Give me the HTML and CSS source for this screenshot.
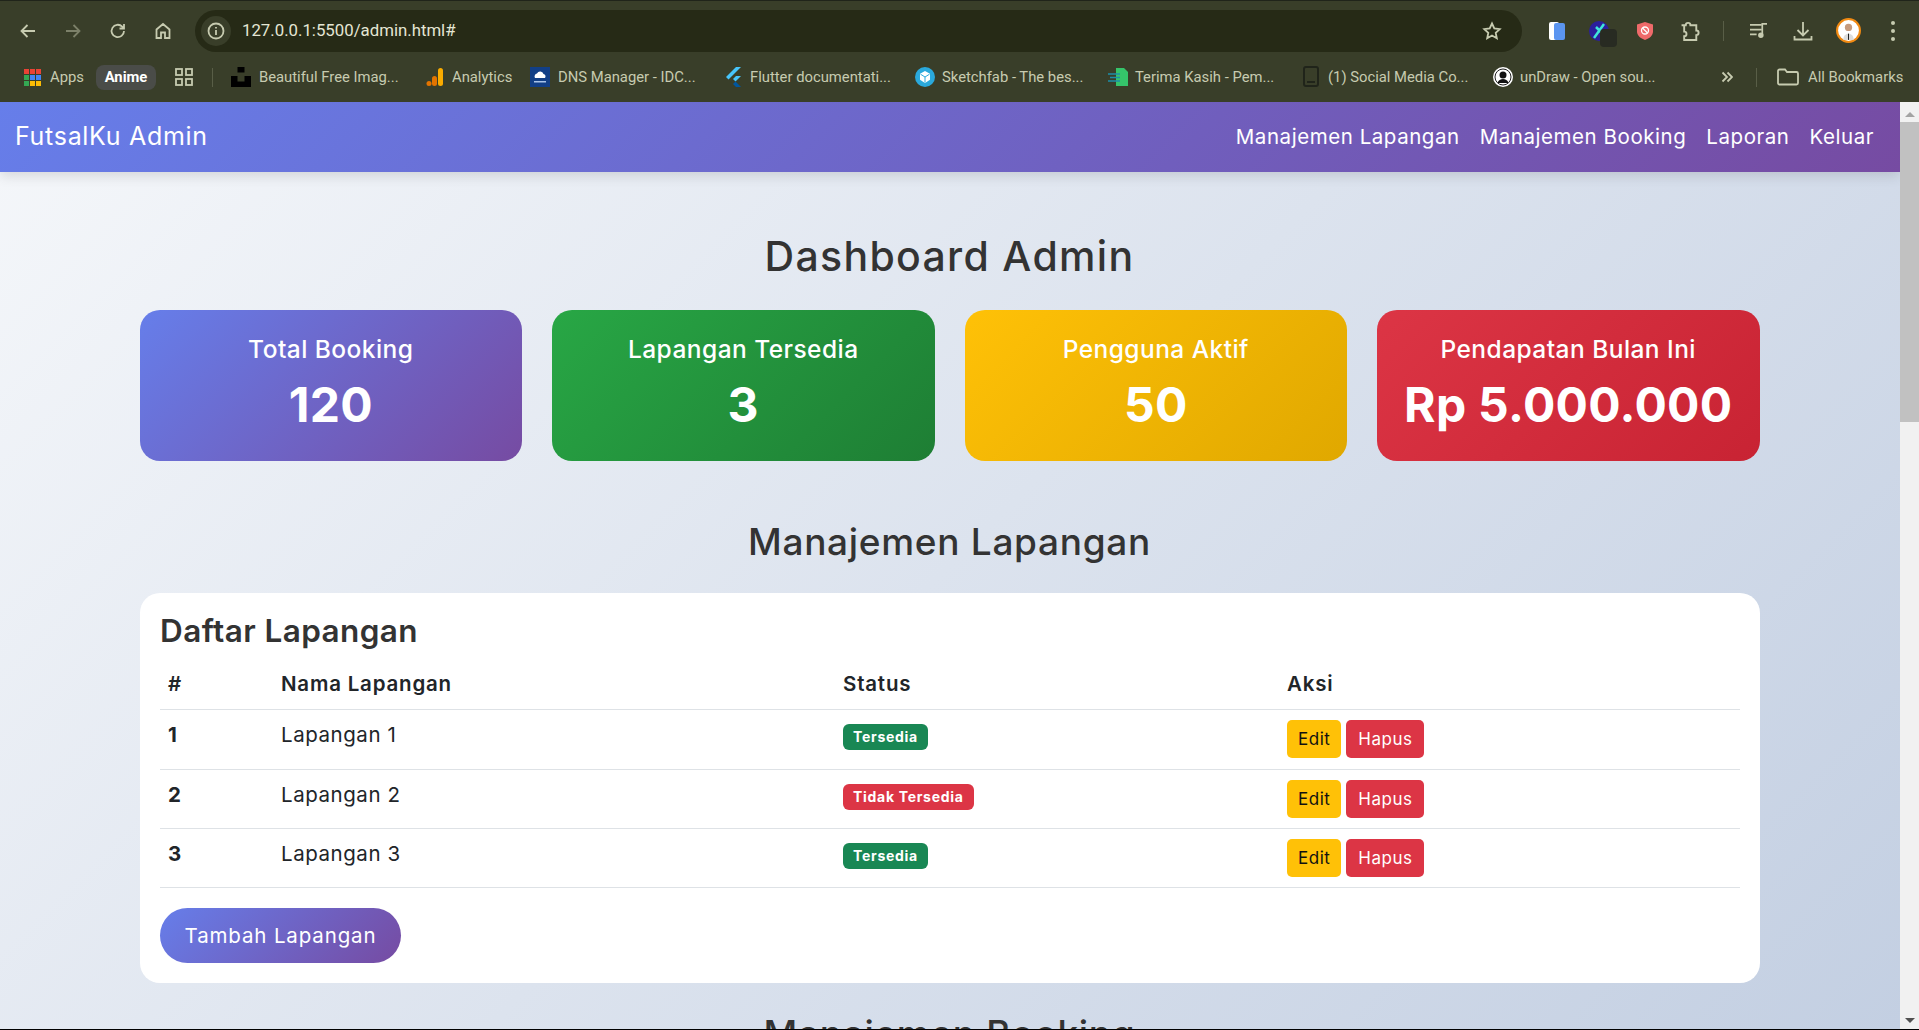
FILE: index.html
```html
<!DOCTYPE html>
<html lang="id">
<head>
  <meta charset="UTF-8" />
  <title>Dashboard Admin - FutsalKu</title>
  <meta name="viewport" content="width=device-width, initial-scale=1.0" />
  <link rel="stylesheet" href="styles.css">
</head>
<body>
  <div class="window">
    <!-- browser toolbar -->
    <header class="browser">
      <div class="toolbar">
        <div class="tool-nav">
          <svg class="ico" viewBox="0 0 20 20"><path d="M17 10H4M9.500 4L3.500 10l6 6"/></svg>
          <svg class="ico ico-dim" viewBox="0 0 20 20"><path d="M3 10h13M10.500 4l6 6-6 6"/></svg>
          <svg class="ico" viewBox="0 0 20 20"><path d="M16 10a6.200 6.200 0 1 1-1.800-4.400L16 7.500M16 3v4.500h-4.500"/></svg>
          <svg class="ico" viewBox="0 0 20 20"><path d="M3.500 17V8.500L10 3l6.500 5.500V17h-4.500v-5.500H8V17z"/></svg>
        </div>
        <div class="omnibox">
          <span class="site-chip">
            <svg class="ico" viewBox="0 0 20 20"><circle cx="10" cy="10" r="7.500"/><path d="M10 9v5M10 6v1.500"/></svg>
          </span>
          <span class="url">127.0.0.1:5500/admin.html#</span>
          <svg class="ico star" viewBox="0 0 20 20"><path d="M10 2.500l2.300 5 5.400.6-4 3.700 1.100 5.400-4.800-2.700-4.800 2.700 1.100-5.400-4-3.700 5.400-.6z"/></svg>
        </div>
        <div class="tool-ext">
          <svg class="ext ext-pages" viewBox="0 0 18 20"><rect x="1" y="1" width="10" height="18" rx="2" fill="#fff"/><rect x="6" y="2" width="11" height="17" rx="2" fill="#5b95f0"/></svg>
          <span class="ext-dev">
            <svg viewBox="0 0 20 20"><circle cx="10" cy="10" r="10" fill="#2b1f9c"/><path d="M5 17L15 3M7 6l6 6" stroke="#3fe6d8" stroke-width="2.500" fill="none"/></svg>
            <i class="ext-badge"></i>
          </span>
          <svg class="ext ext-shield" viewBox="0 0 20 20"><path d="M10 1l8 2.500v7c0 4-3.500 7-8 8.500-4.500-1.500-8-4.500-8-8.500v-7z" fill="#ef6a6a"/><circle cx="10" cy="9.500" r="3.500" fill="none" stroke="#fff" stroke-width="1.300"/><path d="M7.500 7l5 5" stroke="#fff" stroke-width="1.300"/></svg>
          <svg class="ico ext-puzzle" viewBox="2 0 19 19"><path d="M3 4h4a2.200 2.200 0 0 1 4.400 0H17v5a2.200 2.200 0 0 1 0 4.400V18H5.500v-3.500a2.200 2.200 0 0 0 0-4.400V4z"/></svg>
          <span class="tool-sep"></span>
          <svg class="ico ext-music" viewBox="0 0 20 18"><path d="M1 3h12M1 8h12M1 13h7M14 13V2h5"/><circle cx="12.500" cy="14" r="2" fill="#c7cbb0"/></svg>
          <svg class="ico ext-down" viewBox="0 0 20 20"><path d="M10 1v13M4.500 9l5.500 5.500L15.500 9M1.500 15v3.500h17V15"/></svg>
          <svg class="avatar" viewBox="0 0 24 24"><circle cx="12" cy="12" r="11" fill="#fff" stroke="#f28a12" stroke-width="2"/><circle cx="12" cy="9" r="3.500" fill="#c69a7c"/><path d="M7 21c0-4 2-6 5-6s5 2 5 6z" fill="#ddd"/><path d="M11.500 15h1v6h-1z" fill="#222"/></svg>
          <span class="kebab"><i></i><i></i><i></i></span>
        </div>
      </div>
      <nav class="bookmarks">
        <a class="mark mark-apps"><span class="apps-grid"><i class="r"></i><i class="r"></i><i class="r"></i><i class="g"></i><i class="b"></i><i class="b"></i><i class="g"></i><i class="y"></i><i class="y"></i></span>Apps</a>
        <a class="mark mark-anime">Anime</a>
        <svg class="ico mark-tiles" viewBox="0 0 18 18"><rect x="1" y="1" width="6" height="6"/><rect x="11" y="1" width="6" height="6"/><rect x="1" y="11" width="6" height="6"/><rect x="11" y="11" width="6" height="6"/></svg>
        <span class="mark-sep"></span>
        <a class="mark mark-unsplash"><svg viewBox="0 0 20 20"><path d="M6.500 0h7v5.500h-7zM0 9h6.500v5.500h7V9H20v11H0z"/></svg>Beautiful Free Imag...</a>
        <a class="mark mark-ga"><svg viewBox="0 0 18 20"><rect x="12" y="1" width="5" height="18" rx="2.500" fill="#f9ab00"/><rect x="6" y="9" width="5" height="10" rx="2.500" fill="#e37400"/><circle cx="3" cy="16.500" r="2.500" fill="#e37400"/></svg>Analytics</a>
        <a class="mark mark-dns"><svg viewBox="0 0 20 20"><rect width="20" height="20" fill="#123f86"/><path d="M5 11a3 3 0 0 1 2-4.500 3.500 3.500 0 0 1 6.500.5A2.500 2.500 0 0 1 15 11z" fill="#fff"/><path d="M4 14h12v1.500H4z" fill="#a9c4ea"/></svg>DNS Manager - IDC...</a>
        <a class="mark mark-flutter"><svg viewBox="0 0 16 20"><path d="M10 0h5L5 10l-2.500 2.500L0 10z" fill="#47c5fb"/><path d="M10 9h5l-5.500 5.500L7 12z" fill="#47c5fb"/><path d="M7 17l2.500-2.500L15 20h-5z" fill="#00569e"/></svg>Flutter documentati...</a>
        <a class="mark mark-sketch"><svg viewBox="0 0 20 20"><circle cx="10" cy="10" r="10" fill="#2aa9dc"/><path d="M10 4l5 2.800v6L10 16l-5-3.200v-6z" fill="#fff"/><path d="M5.500 7.200L10 10l4.500-2.800M10 10v5.500" stroke="#2aa9dc" fill="none"/></svg>Sketchfab - The bes...</a>
        <a class="mark mark-terima"><svg viewBox="0 0 20 20"><path d="M8 1h8l4 4v14H8z" fill="#35c46a"/><path d="M0 7h12M2 10.500h10M0 14h12" stroke="#1c8fa8" stroke-width="1.500"/></svg>Terima Kasih - Pem...</a>
        <a class="mark mark-social"><svg viewBox="0 0 18 22"><rect x="2" y="1" width="14" height="19" rx="2" fill="none" stroke="#20241a" stroke-width="2"/><path d="M5 16h8" stroke="#20241a" stroke-width="2"/></svg>(1) Social Media Co...</a>
        <a class="mark mark-undraw"><svg viewBox="0 0 20 20"><circle cx="10" cy="10" r="10" fill="#fff"/><circle cx="10" cy="10" r="8" fill="none" stroke="#222" stroke-width="1"/><circle cx="10" cy="8" r="3.500" fill="#111"/><path d="M4.500 16c1-3 3-4 5.500-4s4.500 1 5.500 4z" fill="#111"/></svg>unDraw - Open sou...</a>
        <span class="mark-more"><svg class="ico" viewBox="0 0 12 12"><path d="M1.500 1.500L6 6l-4.500 4.500M6.500 1.500L11 6l-4.500 4.500"/></svg></span>
        <span class="mark-sep"></span>
        <a class="mark mark-all"><svg class="ico" viewBox="0 0 22 18"><path d="M1 3a1.500 1.500 0 0 1 1.500-1.500H8L10 4h9.500A1.500 1.500 0 0 1 21 5.500V15a1.500 1.500 0 0 1-1.500 1.500h-17A1.500 1.500 0 0 1 1 15z"/></svg>All Bookmarks</a>
      </nav>
    </header>

    <div class="viewport">
      <div class="page">
        <nav class="navbar">
          <a class="brand">FutsalKu Admin</a>
          <ul class="nav-links">
            <li>Manajemen Lapangan</li>
            <li>Manajemen Booking</li>
            <li>Laporan</li>
            <li>Keluar</li>
          </ul>
        </nav>

        <main class="container">
          <h1>Dashboard Admin</h1>

          <!-- summary cards -->
          <section class="stats">
            <div class="stat stat-purple"><h3>Total Booking</h3><p>120</p></div>
            <div class="stat stat-green"><h3>Lapangan Tersedia</h3><p>3</p></div>
            <div class="stat stat-yellow"><h3>Pengguna Aktif</h3><p>50</p></div>
            <div class="stat stat-red"><h3>Pendapatan Bulan Ini</h3><p>Rp 5.000.000</p></div>
          </section>

          <h2>Manajemen Lapangan</h2>
          <section class="card">
            <h4>Daftar Lapangan</h4>
            <table class="table">
              <thead>
                <tr>
                  <th class="col-no">#</th>
                  <th class="col-name">Nama Lapangan</th>
                  <th class="col-status">Status</th>
                  <th>Aksi</th>
                </tr>
              </thead>
              <tbody>
                <tr>
                  <td class="num">1</td>
                  <td>Lapangan 1</td>
                  <td><span class="badge badge-ok">Tersedia</span></td>
                  <td><div class="actions"><button class="btn btn-edit">Edit</button><button class="btn btn-del">Hapus</button></div></td>
                </tr>
                <tr>
                  <td class="num">2</td>
                  <td>Lapangan 2</td>
                  <td><span class="badge badge-no">Tidak Tersedia</span></td>
                  <td><div class="actions"><button class="btn btn-edit">Edit</button><button class="btn btn-del">Hapus</button></div></td>
                </tr>
                <tr>
                  <td class="num">3</td>
                  <td>Lapangan 3</td>
                  <td><span class="badge badge-ok">Tersedia</span></td>
                  <td><div class="actions"><button class="btn btn-edit">Edit</button><button class="btn btn-del">Hapus</button></div></td>
                </tr>
              </tbody>
            </table>
            <button class="btn-add">Tambah Lapangan</button>
          </section>

          <h2 class="next-head">Manajemen Booking</h2>
        </main>
      </div>

      <!-- scrollbar -->
      <div class="scrollbar">
        <span class="arrow-up"></span>
        <span class="thumb"></span>
        <span class="arrow-down"></span>
      </div>
    </div>
  </div>
</body>
</html>
```

FILE: styles.css
```css
/* ---------- RESET ---------- */
*,*::before,*::after{box-sizing:border-box;}
html,body{height:100%;}
body{
  margin:0;
  overflow:hidden;
  background:#000;
  font-family:'Inter','Liberation Sans',sans-serif;
  color:#333;
}
h1,h2,h3,h4,p,ul{margin:0;padding:0;}

.window{
  height:1029px;
  display:flex;
  flex-direction:column;
}

/* ---------- BROWSER CHROME ---------- */
.browser{
  height:102px;
  flex-shrink:0;
  background:#393e29;
  border-top:1px solid #20241a;
  font-family:'Roboto','Liberation Sans',sans-serif;
  color:#c7cbb0;
}
.ico{
  display:block;
  width:20px;
  height:20px;
  fill:none;
  stroke:#c7cbb0;
  stroke-width:1.8;
}
.ico-dim{stroke:#7c8069;}

.toolbar{
  height:51px;
  padding-top:8px;
  display:flex;
  align-items:center;
}
.tool-nav{
  width:195px;
  padding-left:18px;
  display:flex;
  gap:25px;
  flex-shrink:0;
}
.omnibox{
  width:1327px;
  height:42px;
  padding:0 20px 0 6px;
  background:#262a16;
  border-radius:21px;
  display:flex;
  align-items:center;
  flex-shrink:0;
}
.site-chip{
  width:30px;
  height:30px;
  border-radius:50%;
  background:#393e29;
  display:flex;
  align-items:center;
  justify-content:center;
  flex-shrink:0;
}
.url{
  margin-left:11px;
  padding-bottom:2px;
  flex:1;
  font-size:16.800px;
  color:#e4e6d4;
}
.tool-ext{
  display:flex;
  align-items:center;
  flex:1;
  padding-left:26px;
}
.ext-pages{width:18px;height:20px;}
.ext-dev{
  position:relative;
  width:20px;
  height:20px;
  margin-left:23px;
}
.ext-dev svg{display:block;width:20px;height:20px;}
.ext-badge{
  position:absolute;
  left:11px;
  top:8px;
  width:17px;
  height:18px;
  border-radius:4px;
  background:#282b22;
}
.ext-shield{width:20px;height:20px;margin-left:26px;}
.ext-puzzle{margin-left:25px;width:21px;}
.tool-sep{
  width:1px;
  height:20px;
  margin-left:22px;
  background:#595e47;
}
.ext-music{margin-left:25px;width:19px;height:17px;}
.ext-down{margin-left:25px;}
.avatar{width:25px;height:25px;margin-left:23px;}
.kebab{
  margin-left:30px;
  display:flex;
  flex-direction:column;
  gap:4px;
}
.kebab i{
  width:4px;
  height:4px;
  border-radius:50%;
  background:#c7cbb0;
}

.bookmarks{
  height:50px;
  display:flex;
  align-items:center;
  padding:0 0 0 24px;
  font-size:14.800px;
}
.mark{
  display:flex;
  align-items:center;
  white-space:nowrap;
  flex-shrink:0;
}
.mark svg{display:block;flex-shrink:0;margin-right:8px;width:20px;height:20px;}
.apps-grid{
  display:grid;
  grid-template-columns:repeat(3,5px);
  gap:1px;
  margin-right:9px;
}
.apps-grid i{height:5px;}
.apps-grid .r{background:#ea4335;}
.apps-grid .g{background:#34a853;}
.apps-grid .b{background:#4285f4;}
.apps-grid .y{background:#fbbc05;}
.mark-apps{width:72px;}
.mark-anime{
  width:60px;
  height:25px;
  justify-content:center;
  background:#4a4c48;
  border-radius:8px;
  color:#fff;
  font-weight:700;
}
.mark-tiles{width:18px;height:18px;margin-left:19px;flex-shrink:0;}
.mark-sep{
  width:1px;
  height:19px;
  margin-left:19px;
  background:#595e47;
  flex-shrink:0;
}
.mark-unsplash{margin-left:18px;width:195px;}
.mark-unsplash svg{fill:#000;}
.mark-ga{width:104px;}
.mark-ga svg{width:18px;}
.mark-dns{width:196px;}
.mark-flutter{width:189px;}
.mark-flutter svg{width:16px;}
.mark-sketch{width:193px;}
.mark-sketch svg{margin-right:7px;}
.mark-terima{width:194px;}
.mark-terima svg{margin-right:7px;}
.mark-social{width:191px;}
.mark-social svg{width:18px;height:22px;}
.mark-undraw{width:228px;}
.mark-undraw svg{margin-right:7px;}
.mark-more{width:16px;}
.mark-more .ico{width:12px;height:12px;}
.mark-all{margin-left:20px;}
.mark-all svg.ico{width:22px;height:18px;margin-right:9px;}

/* ---------- VIEWPORT ---------- */
.viewport{
  flex:1;
  min-height:0;
  display:flex;
}
.page{
  flex:1;
  overflow:hidden;
  background:linear-gradient(135deg,#f5f7fa 0%,#c3cfe2 100%);
}
.scrollbar{
  width:19px;
  flex-shrink:0;
  background:#f1f1f1;
  display:flex;
  flex-direction:column;
  align-items:center;
}
.arrow-up,.arrow-down{
  width:0;
  height:0;
  border-left:5px solid transparent;
  border-right:5px solid transparent;
}
.arrow-up{margin-top:10px;border-bottom:5px solid #a3a3a3;}
.arrow-down{margin-top:auto;margin-bottom:6px;border-top:5px solid #505050;}
.thumb{
  width:100%;
  height:300px;
  margin-top:5px;
  background:#c1c1c1;
}

/* ---------- NAVBAR ---------- */
.navbar{
  height:70px;
  padding:0 26px 2px 15px;
  display:flex;
  align-items:center;
  justify-content:space-between;
  background:linear-gradient(135deg,#667eea 0%,#764ba2 100%);
  box-shadow:0 4px 12px rgba(0,0,0,.12);
  color:#fff;
}
.brand{font-size:25px;font-weight:400;letter-spacing:.7px;}
.nav-links{
  list-style:none;
  display:flex;
  gap:20px;
  font-size:20.500px;
  font-weight:400;
  letter-spacing:.55px;
}

/* ---------- CONTENT ---------- */
.container{
  padding:60px 140.500px 0 139.500px;
}
h1{
  font-size:41px;
  line-height:48px;
  font-weight:500;
  text-align:center;
  letter-spacing:1.300px;
  margin-bottom:30px;
}
h2{
  font-size:37px;
  line-height:42px;
  font-weight:500;
  text-align:center;
  letter-spacing:.7px;
}
.stats{
  display:grid;
  grid-template-columns:repeat(4,1fr);
  gap:30px;
  margin-bottom:60px;
}
.stat{
  height:151px;
  padding-top:22px;
  border-radius:20px;
  text-align:center;
  color:#fff;
}
.stat h3{font-size:24.500px;line-height:34px;font-weight:500;letter-spacing:.45px;}
.stat p{font-size:48px;line-height:58px;font-weight:700;margin-top:10px;letter-spacing:.3px;}
.stat-purple{background:linear-gradient(135deg,#667eea 0%,#764ba2 100%);}
.stat-green{background:linear-gradient(135deg,#28a745 0%,#1e7e34 100%);}
.stat-yellow{background:linear-gradient(135deg,#ffc107 0%,#e0a800 100%);}
.stat-red{background:linear-gradient(135deg,#dc3545 0%,#c82333 100%);}

.card{
  height:390px;
  margin-top:30px;
  padding:20px 20px 20px 20.500px;
  background:#fff;
  border-radius:20px;
}
.card h4{
  font-size:31.500px;
  line-height:36px;
  font-weight:600;
  letter-spacing:.4px;
  margin-bottom:9px;
}
.table{
  width:100%;
  border-collapse:collapse;
  table-layout:fixed;
  font-size:20.500px;
  color:#212529;
}
.table th{
  height:51px;
  padding:0 8px;
  text-align:left;
  font-weight:600;
  letter-spacing:.8px;
  border-bottom:1px solid #dee2e6;
}
.col-no{width:113px;}
.col-name{width:562px;}
.col-status{width:444px;}
.table td{
  padding:10px 8px 9.500px;
  vertical-align:top;
  line-height:30px;
  letter-spacing:.55px;
  border-bottom:1px solid #dee2e6;
}
.table tbody tr:first-child td{padding-bottom:10.500px;}
.num{font-weight:700;}
.badge{
  display:inline-block;
  padding:0 10px;
  height:26px;
  line-height:26px;
  margin-top:4px;
  border-radius:6px;
  font-size:14px;
  font-weight:700;
  letter-spacing:.7px;
  color:#fff;
  vertical-align:top;
}
.badge-ok{background:#198754;}
.badge-no{background:#dc3545;}
.actions{display:flex;gap:5px;}
.btn{
  height:38.500px;
  padding:2px 11px 0;
  border:0;
  border-radius:5px;
  font:inherit;
  font-size:17px;
  letter-spacing:.5px;
  line-height:1;
}
.btn-edit{background:#ffc107;color:#111;}
.btn-del{background:#dc3545;color:#fff;padding:2px 12px 0;}
.btn-add{
  height:55px;
  width:241px;
  margin-top:20px;
  border:0;
  border-radius:28px;
  background:linear-gradient(135deg,#667eea 0%,#764ba2 100%);
  color:#fff;
  font:inherit;
  font-size:20.500px;
  font-weight:400;
  letter-spacing:.85px;
}
.next-head{margin-top:30px;}
```
